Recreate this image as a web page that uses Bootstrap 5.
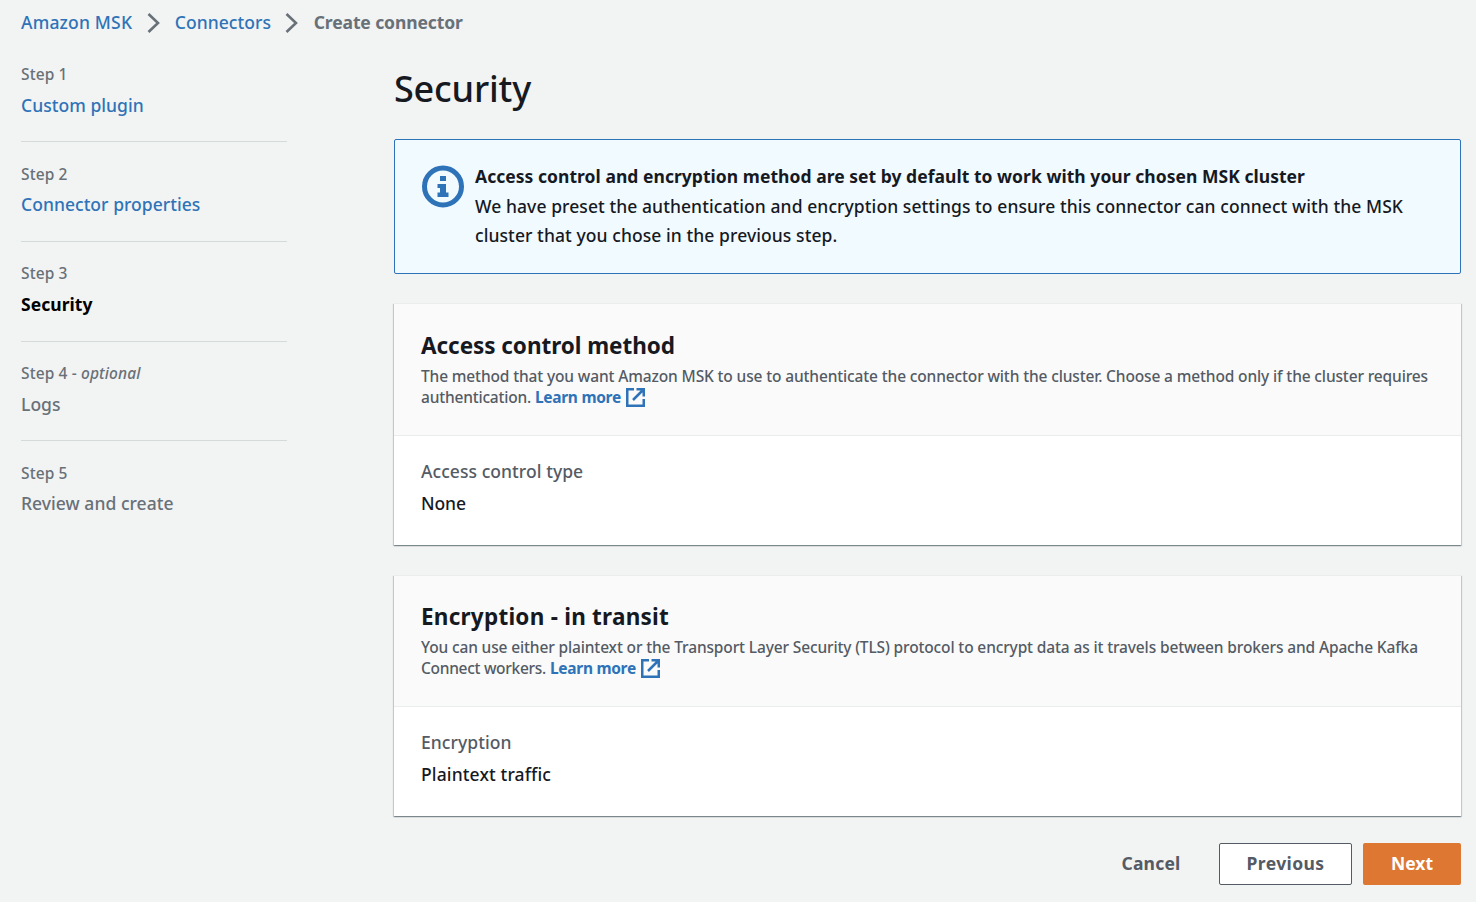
<!DOCTYPE html>
<html lang="en">
<head>
<meta charset="utf-8">
<meta name="viewport" content="width=device-width, initial-scale=1">
<title>Create connector</title>
<link rel="stylesheet" href="https://cdn.jsdelivr.net/npm/bootstrap@5.3.0/dist/css/bootstrap.min.css">
<style>
body{font-family:"Noto Sans","Open Sans",sans-serif;font-size:17.5px;font-weight:500;line-height:29.33px;letter-spacing:.04px;background:#f2f3f3;color:#16191f;height:902px;overflow:hidden;white-space:nowrap}
a{color:#2e73b8;text-decoration:none}
.crumbs{height:38px;padding:8px 0 0 21px;color:#687078}
.crumbs svg{margin:0 14.2px 0 14.5px}
.crumbs a:first-child{letter-spacing:.18px}
.crumbs b{letter-spacing:-.1px}
.page-body{padding:0 15px 0 21px}
.steps{width:266px;margin-top:21px;color:#687078}
.steps li{height:99.7px;padding-top:7px}
.steps li+li{border-top:1px solid #d5dbdb;padding-top:21.5px}
.steps li:first-child{height:82.2px;padding-top:5px}
.step-label{font-size:15.5px;line-height:21px;letter-spacing:.12px}
.step-name{line-height:29px;margin-top:5.5px}
.content{margin-left:107px;width:1067px}
h1{font-size:36px;font-weight:500;line-height:44px;letter-spacing:-.18px;margin:29px 0 28px}
.info{border:1px solid #2e73b8;border-radius:2px;background:#f1faff;height:135px;padding:22px 27px;gap:11px}
.info svg{margin-top:3px}
.info b{letter-spacing:.037px;line-height:29px;margin-bottom:1.3px}
.info span{letter-spacing:.078px;line-height:29px}
.panel{background:#fff;box-shadow:0 1px 1px 0 rgba(0,28,36,.3),1px 1px 1px 0 rgba(0,28,36,.15),-1px 1px 1px 0 rgba(0,28,36,.15);border-top:1px solid #eaeded;margin-top:29px;height:242px}
.panel-head{background:#fafafa;border-bottom:1px solid #eaeded;height:132px;padding:27px 27px 0}
.panel+.panel{margin-top:30px;height:241px}
.panel+.panel .panel-head{height:131px;padding-top:26px}
.panel-head h2{font-size:22.5px;font-weight:700;line-height:30px;letter-spacing:-.05px;margin:0 0 5px}
.panel+.panel h2{letter-spacing:.24px}
.panel-head p{font-size:15.5px;line-height:21px;color:#545b64;letter-spacing:-.138px;margin:0}
.panel-head .tight{letter-spacing:-.2px}
.panel-head p a,.panel+.panel .tight{letter-spacing:-.29px}
.panel-head svg{vertical-align:-4px;margin-left:1.5px}
.panel-main{padding:21px 27px;margin:0}
.panel-main dt{font-weight:500;color:#545b64;letter-spacing:.06px}
.panel-main dd{margin:3px 0 0;letter-spacing:-.1px}
.panel+.panel dd{letter-spacing:.13px}
.actions{margin-top:27px;gap:11px}
.actions .btn{font-size:17.5px;font-weight:700;border-radius:2px;height:42px;line-height:38px;padding:0 0 2px}
.actions .cancel{width:86px;color:#545b64;margin-right:14px;letter-spacing:.2px}
.actions .previous{width:133px;background:#fff;border-color:#545b64;color:#545b64;letter-spacing:.38px}
.actions .next{width:98px;background:#dd7732;color:#fff}
</style>
<script src="https://cdn.jsdelivr.net/npm/bootstrap@5.3.0/dist/js/bootstrap.bundle.min.js"></script>
</head>
<body>
<nav class="crumbs d-flex align-items-center">
<a href="#">Amazon MSK</a>
<svg width="14" height="20" viewBox="0 0 14 20"><path d="M1.500 1l9.500 9-9.500 9" fill="none" stroke="#687078" stroke-width="2.600"/></svg>
<a href="#">Connectors</a>
<svg width="14" height="20" viewBox="0 0 14 20"><path d="M1.500 1l9.500 9-9.500 9" fill="none" stroke="#687078" stroke-width="2.600"/></svg>
<b>Create connector</b>
</nav>
<div class="page-body d-flex align-items-start">
<ol class="steps list-unstyled flex-shrink-0">
<li><div class="step-label">Step 1</div><div class="step-name"><a href="#">Custom plugin</a></div></li>
<li><div class="step-label">Step 2</div><div class="step-name"><a href="#">Connector properties</a></div></li>
<li><div class="step-label">Step 3</div><div class="step-name"><b class="text-black">Security</b></div></li>
<li><div class="step-label">Step 4 - <i>optional</i></div><div class="step-name">Logs</div></li>
<li><div class="step-label">Step 5</div><div class="step-name">Review and create</div></li>
</ol>
<main class="content flex-shrink-0">
<h1>Security</h1>
<div class="info d-flex">
<svg width="42" height="43" viewBox="0 0 42 43"><circle cx="21" cy="21.500" r="18.500" fill="none" stroke="#2e73b8" stroke-width="5"/><path d="M18 11h6v5h-6zM15.500 19H24v8.500h2.500v4.500h-11v-4.500H18V23h-2.500z" fill="#2e73b8"/></svg>
<div><b class="d-block">Access control and encryption method are set by default to work with your chosen MSK cluster</b><span class="d-block">We have preset the authentication and encryption settings to ensure this connector can connect with the MSK<br>cluster that you chose in the previous step.</span></div>
</div>
<section class="panel">
<div class="panel-head"><h2>Access control method</h2>
<p>The method that you want Amazon MSK to use to authenticate the connector with the cluster. Choose a method only if the cluster requires<br><span class="tight">authentication.</span> <a href="#" class="fw-bold">Learn more <svg width="19" height="19" viewBox="0 0 19 19"><path d="M8 1.250H1.250v16.500h16.500V11M10.500 1.250h7.250V8.500M17.500 1.500L7 12" fill="none" stroke="#2e73b8" stroke-width="2.500"/></svg></a></p></div>
<dl class="panel-main"><dt>Access control type</dt><dd>None</dd></dl>
</section>
<section class="panel">
<div class="panel-head"><h2>Encryption - in transit</h2>
<p>You can use either plaintext or the Transport Layer Security (TLS) protocol to encrypt data as it travels between brokers and Apache Kafka<br><span class="tight">Connect workers.</span> <a href="#" class="fw-bold">Learn more <svg width="19" height="19" viewBox="0 0 19 19"><path d="M8 1.250H1.250v16.500h16.500V11M10.500 1.250h7.250V8.500M17.500 1.500L7 12" fill="none" stroke="#2e73b8" stroke-width="2.500"/></svg></a></p></div>
<dl class="panel-main"><dt>Encryption</dt><dd>Plaintext traffic</dd></dl>
</section>
<div class="actions d-flex justify-content-end"><button class="btn cancel">Cancel</button><button class="btn previous">Previous</button><button class="btn next">Next</button></div>
</main>
</div>
</body>
</html>
